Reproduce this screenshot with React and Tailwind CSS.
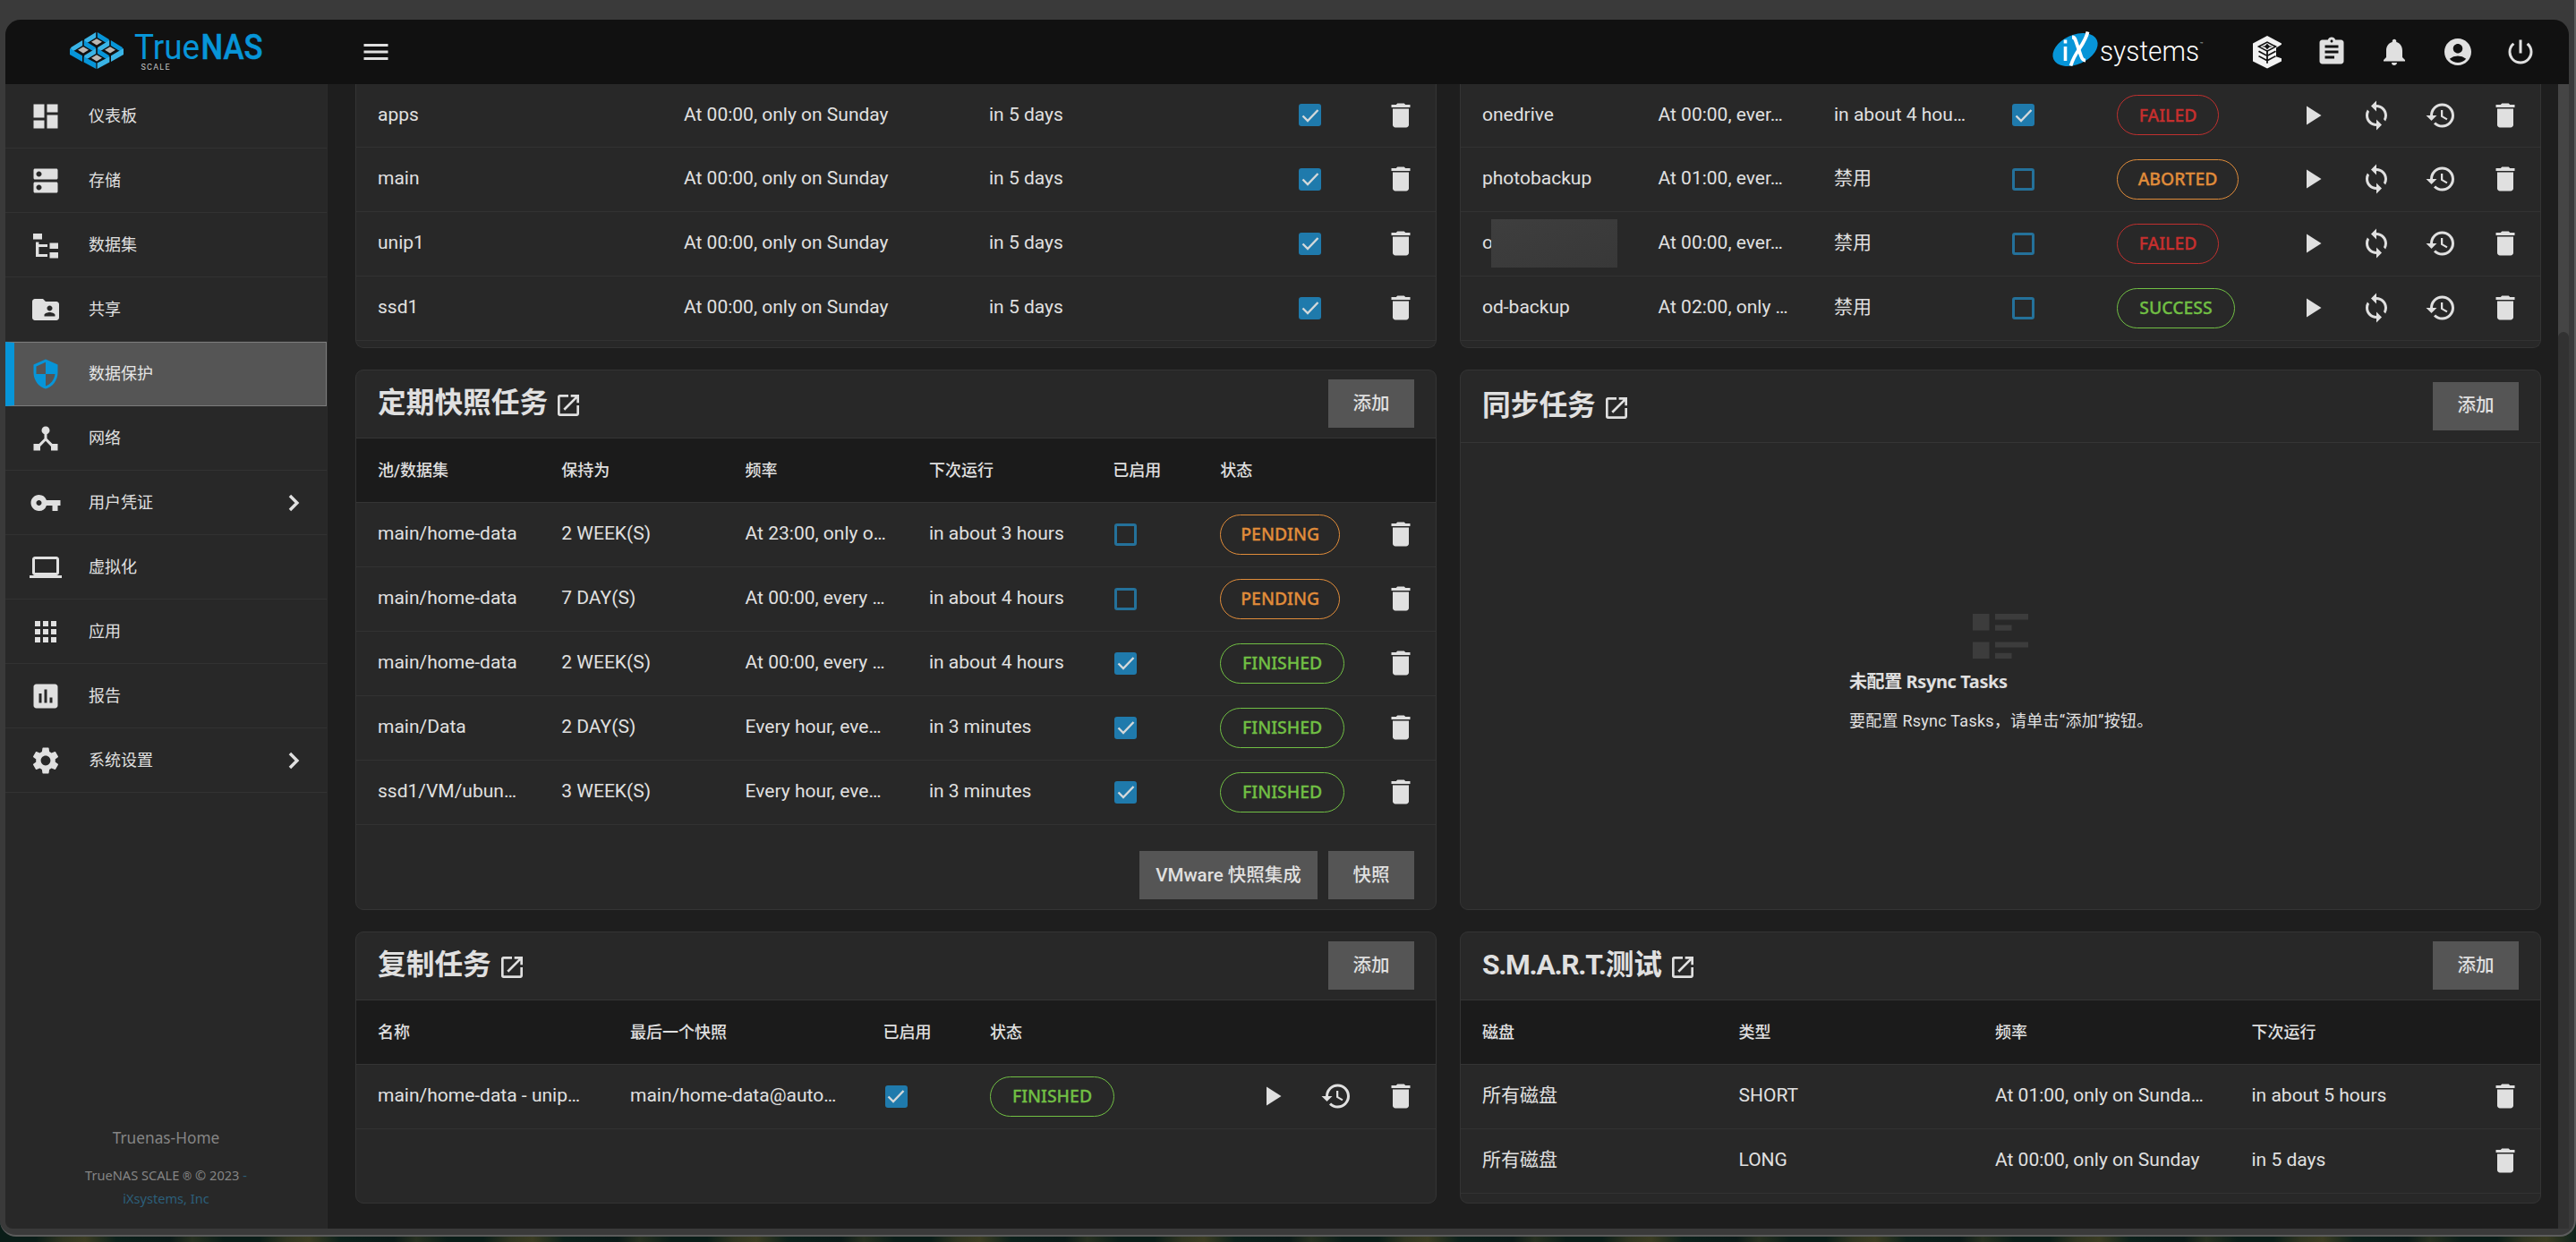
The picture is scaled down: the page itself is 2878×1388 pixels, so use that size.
import {
  MdDashboard, MdDns, MdFolderShared, MdSecurity, MdDeviceHub, MdVpnKey, MdLaptop, MdApps,
  MdAssessment, MdSettings, MdMenu, MdAssignment, MdNotifications,
  MdAccountCircle, MdPowerSettingsNew, MdDelete, MdHistory, MdSync, MdPlayArrow, MdOpenInNew,
} from 'react-icons/md';

function DatasetIcon() {
  return (
    <svg width="36" height="36" viewBox="0 0 36 36" fill="currentColor">
      <rect x="4" y="5" width="10" height="6.5" />
      <path d="M7 14.5h3.400v2.600H20v3h-9.600v7.800H20v3H7z" />
      <rect x="22.500" y="15.500" width="9.500" height="6.500" />
      <rect x="22.500" y="26" width="9.500" height="6.500" />
    </svg>
  );
}

function Chevron() {
  return (
    <svg width="36" height="36" viewBox="0 0 24 24" fill="none" stroke="currentColor" strokeWidth="2.300">
      <path d="M9.300 6.700l5.300 5.300-5.300 5.300" />
    </svg>
  );
}

function TrueNasMark() {
  const cells = [[30, 11.5], [15, 20.5], [45, 20.5], [30, 29.5]];
  return (
    <svg width="60" height="42" viewBox="0 0 60 42" className="overflow-visible">
      {cells.map(([x, y]) => (
        <g key={`${x}-${y}`} transform={`translate(${x} ${y})`}>
          <path d="M-13.800-2.600L-.8-10.400v6L-8.200 0-13.800 3z" fill="#3ab4e6" />
          <path d="M13.800-2.600L.8-10.400v6L8.200 0 13.800 3z" fill="#0795d8" />
          <path d="M-7.500 .3L0-4.300 7.500 .3 0 5z" fill="#111" />
          <path d="M-6 .3L0-3.300 6 .3 0 3.900z" fill="#b9b6b2" />
        </g>
      ))}
      <path d="M0 19l14 8.200v6.800L0 26z" fill="#0795d8" />
      <path d="M15.600 28.200l13.800 7.400V42l-13.800-7.400z" fill="#0795d8" />
      <path d="M60 19l-14 8.200v6.800L60 26z" fill="#3ab4e6" />
      <path d="M44.400 28.200l-13.800 7.400V42l13.800-7.400z" fill="#3ab4e6" />
    </svg>
  );
}

function TrueNasWord() {
  return (
    <svg width="152" height="50" viewBox="0 0 152 50" fontFamily="Roboto, 'Open Sans', sans-serif" className="overflow-visible">
      <text x="1" y="35" fontSize="39" fill="#0795d8" textLength="73" lengthAdjust="spacingAndGlyphs">True</text>
      <text x="75.500" y="35" fontSize="39" fontWeight="500" fill="#0795d8" stroke="#0795d8" strokeWidth="0.500" textLength="69" lengthAdjust="spacingAndGlyphs">NAS</text>
      <text x="8.500" y="47" fontSize="9" fill="#c4c4c4" textLength="32">SCALE</text>
    </svg>
  );
}

function IxLogo() {
  return (
    <svg width="176" height="50" viewBox="0 0 176 50" className="overflow-visible">
      <ellipse cx="25.500" cy="22.500" rx="26.500" ry="16.500" transform="rotate(-24 25.500 22.500)" fill="#0795d8" />
      <g stroke="#fff" fill="none">
        <path d="M14.500 19v16" strokeWidth="3.600" />
        <path d="M14.500 11.500v4" strokeWidth="3.600" />
        <path d="M22 8.500q3 0 4 4l6 17q1.500 5 5 5" strokeWidth="3.800" />
        <path d="M39.500 2.500q-1.500 7-9 18.500-7 10-10 19.500" strokeWidth="3.800" />
      </g>
      <text x="53" y="35" fontSize="32" fontFamily="Roboto, sans-serif" fontWeight="300" fill="#fff" textLength="111" lengthAdjust="spacingAndGlyphs">systems</text>
      <text x="165" y="18" fontSize="6" fontFamily="Roboto, sans-serif" fill="#ccc">™</text>
    </svg>
  );
}

function TrueCommandIcon() {
  return (
    <svg width="36" height="37" viewBox="0 0 36 44" preserveAspectRatio="none">
      <path d="M18 0L34 10v1.500l-6 4.500v11.500l6 2.500v4L18 43.500 2 34V10z" fill="#f2f2f2" />
      <path d="M18 8.500l9.500 5.800-9.500 6-9.500-6z" fill="none" stroke="#111" strokeWidth="1.800" />
      <path d="M18 19v17.500M8.500 20.500l9.500 6 9.500-6M8.500 27l9.500 6 9.500-6" fill="none" stroke="#111" strokeWidth="1.800" />
      <path d="M18 10.500l2.300 2.800 4 1-4 1-2.300 2.700-2.300-2.700-4-1 4-1z" fill="#111" />
    </svg>
  );
}

function EmptyIcon() {
  return (
    <svg width="62" height="50" viewBox="0 0 62 50" fill="#3c3c3c" className="ml-[138px]">
      <rect width="18.500" height="18.500" /><rect x="25" width="37" height="6.500" /><rect x="25" y="12.500" width="18.500" height="6.200" />
      <rect y="31.500" width="18.500" height="18.500" /><rect x="25" y="31.500" width="37" height="6" /><rect x="25" y="43.800" width="18.500" height="6.200" />
    </svg>
  );
}

const menu = [
  ['仪表板', MdDashboard],
  ['存储', MdDns],
  ['数据集', DatasetIcon],
  ['共享', MdFolderShared],
  ['数据保护', MdSecurity, 'active'],
  ['网络', MdDeviceHub],
  ['用户凭证', MdVpnKey, 'more'],
  ['虚拟化', MdLaptop],
  ['应用', MdApps],
  ['报告', MdAssessment],
  ['系统设置', MdSettings, 'more'],
];

function Sidebar() {
  return (
    <aside className="flex w-[360px] shrink-0 flex-col border-r border-[#2b2b2b] bg-[#282828]">
      {menu.map(([label, Icon, kind]) =>
        kind === 'active' ? (
          <div key={label} className="flex h-[72px] items-center border border-l-[10px] border-[#7c7c7c] border-l-[#0795d8] bg-[#555] pb-px">
            <Icon size={36} className="ml-[17px] text-[#0795d8]" />
            <span className="ml-[30px] text-[18px] text-[#e6e6e6]">{label}</span>
          </div>
        ) : (
          <div key={label} className="flex h-[72px] items-center border-b border-[#323232] pl-[27px] pr-[19px]">
            <Icon size={36} />
            <span className="ml-[30px] grow text-[18px]">{label}</span>
            {kind === 'more' && <Chevron />}
          </div>
        )
      )}
      <div className="mt-auto flex flex-col items-center pb-[22px] font-['Noto_Sans',sans-serif] text-[#858585]">
        <div className="text-[17.300px] leading-6">Truenas-Home</div>
        <div className="mt-[17px] text-[14.600px] leading-6">TrueNAS SCALE <span className="font-[Roboto] text-[13px]">®</span> © 2023 <span className="text-[#2c5f7a]">-</span></div>
        <div className="text-[14.600px] leading-6 text-[#2c5f7a]">iXsystems, Inc</div>
      </div>
    </aside>
  );
}

function TopBar() {
  return (
    <header className="flex h-[72px] shrink-0 items-center rounded-t-[17px] bg-[#111] pl-[72px] pr-[36px]">
      <div className="-mt-1"><TrueNasMark /></div>
      <div className="-mt-1 ml-[11px]"><TrueNasWord /></div>
      <MdMenu size={36} className="ml-[101px]" />
      <div className="ml-auto flex items-center">
        <IxLogo />
        <div className="ml-[46px]"><TrueCommandIcon /></div>
        <div className="ml-[36px] flex gap-[34.500px]">
          <MdAssignment size={36} />
          <MdNotifications size={36} />
          <MdAccountCircle size={36} />
          <MdPowerSettingsNew size={36} />
        </div>
      </div>
    </header>
  );
}

function Check({ on }) {
  return on ? (
    <span className="ml-[2px] flex size-[25px] items-center justify-center rounded-[3px] bg-[#1f7aac]">
      <svg width="20" height="20" viewBox="0 0 20 20" fill="none" stroke="#d3d8da" strokeWidth="2.400"><path d="M1.500 10.500l5.500 5.500L18.500 4" /></svg>
    </span>
  ) : (
    <span className="ml-[2px] block size-[25px] rounded-[3px] border-[3px] border-[#24719a]" />
  );
}

const tones = {
  FAILED: 'w-[114px] border-[#c0302f] text-[#c62f2e]',
  ABORTED: 'w-[136px] border-[#e08c3a] text-[#e08c3a]',
  SUCCESS: 'w-[132px] border-[#71bf44] text-[#71bf44]',
  PENDING: 'w-[134px] border-[#e08c3a] text-[#e08c3a]',
  FINISHED: 'w-[139px] border-[#71bf44] text-[#71bf44]',
};

function Pill({ state }) {
  return (
    <span className={`flex h-[45px] items-center justify-center rounded-full border-[1.500px] font-['Noto_Sans',sans-serif] text-[19.400px] font-medium [-webkit-text-stroke:0.3px_currentColor] ${tones[state]}`}>
      {state}
    </span>
  );
}

const actionIcons = { play: MdPlayArrow, sync: MdSync, history: MdHistory, trash: MdDelete };

function Row({ cols, cells, state, on, actions, first }) {
  return (
    <div className={`grid shrink-0 items-center border-b border-[#323232] pb-px pl-6 pr-[21px] text-[21px] ${first ? 'h-[71px]' : 'h-[72px]'} ${cols}`}>
      {cells.map((c, i) => (
        <span key={i} className="whitespace-nowrap">{c}</span>
      ))}
      {on !== undefined && <Check on={on} />}
      {state && <div className="flex"><Pill state={state} /></div>}
      <div className="col-start-[-2] flex gap-9">
        {actions.map((a) => {
          const Icon = actionIcons[a];
          return <Icon key={a} size={36} />;
        })}
      </div>
    </div>
  );
}

function Head({ cols, labels }) {
  return (
    <div className={`grid h-[72px] shrink-0 items-center border-b border-[#353535] bg-[#1b1b1b] pb-px pl-6 pr-[21px] text-[18px] font-medium ${cols}`}>
      {labels.map((l) => <span key={l} className="whitespace-nowrap">{l}</span>)}
    </div>
  );
}

function Button({ children }) {
  return <button className="flex h-[54px] w-24 items-center justify-center bg-[#555] text-[20.500px] font-medium">{children}</button>;
}

function Title({ children, tall }) {
  return (
    <div className={`flex shrink-0 items-center justify-between border-b border-[#353535] pb-px px-6 ${tall ? 'h-[81px]' : 'h-[76px]'}`}>
      <h2 className="flex items-center text-[31.700px] font-bold leading-none">
        {children}
        <MdOpenInNew size={32} className="ml-[7px] mt-[4px]" />
      </h2>
      <Button>添加</Button>
    </div>
  );
}

function Card({ children, cut }) {
  return (
    <section className={`flex flex-col overflow-hidden border border-[#343434] bg-[#282828] ${cut ? 'rounded-b-[9px] border-t-0' : 'rounded-[9px]'}`}>
      {children}
    </section>
  );
}

const scrubCols = 'grid-cols-[342px_341px_344px_1fr_auto]';
const cloudCols = 'grid-cols-[196.500px_196.500px_197px_119px_1fr_auto]';
const snapCols = 'grid-cols-[205.300px_205.300px_205.300px_205.300px_120px_1fr_auto]';
const replCols = 'grid-cols-[282px_282.500px_119.500px_1fr_auto]';
const smartCols = 'grid-cols-[286.500px_286.500px_286.500px_1fr_auto]';
const allActions = ['play', 'sync', 'history', 'trash'];

function Redacted() {
  return (
    <span className="flex items-center">
      <span className="w-[10px]">o</span>
      <span className="relative h-[54px] w-[141px] bg-gradient-to-br from-[#3e3e3e] to-[#383838]" />
    </span>
  );
}

export default function App() {
  return (
    <div className="h-[1388px] w-[2878px] overflow-hidden bg-[repeating-linear-gradient(90deg,#0a1d18_0px,#0a1d18_40px,#2e3420_70px,#3a3c22_95px,#0c211b_130px,#0b1a18_190px,#263020_215px,#0a1d18_250px)] text-[#e0e0e0] font-[Roboto,'Noto_Sans_CJK_SC',sans-serif]">
      <div className="flex h-[1382px] flex-col rounded-b-[18px] border-b-2 border-r-2 border-[#5c5c5c] bg-[#3a3a3a] pb-[7px] pl-[6px] pr-[6px] pt-[22px]">
        <TopBar />
        <div className="flex min-h-0 grow overflow-hidden rounded-bl-[8px]">
          <Sidebar />
          <main className="grid grow grid-cols-[1208px_1208px] grid-rows-[295px_604px_304px] gap-x-[26px] gap-y-6 bg-[#1e1e1e] pl-[31px]">
            <Card cut>
              {['apps', 'main', 'unip1', 'ssd1'].map((n, i) => (
                <Row key={n} first={i === 0} cols={scrubCols} cells={[n, 'At 00:00, only on Sunday', 'in 5 days']} on actions={['trash']} />
              ))}
            </Card>
            <Card cut>
              <Row first cols={cloudCols} cells={['onedrive', 'At 00:00, ever…', 'in about 4 hou…']} on state="FAILED" actions={allActions} />
              <Row cols={cloudCols} cells={['photobackup', 'At 01:00, ever…', '禁用']} on={false} state="ABORTED" actions={allActions} />
              <Row cols={cloudCols} cells={[<Redacted />, 'At 00:00, ever…', '禁用']} on={false} state="FAILED" actions={allActions} />
              <Row cols={cloudCols} cells={['od-backup', 'At 02:00, only …', '禁用']} on={false} state="SUCCESS" actions={allActions} />
            </Card>
            <Card>
              <Title>定期快照任务</Title>
              <Head cols={snapCols} labels={['池/数据集', '保持为', '频率', '下次运行', '已启用', '状态']} />
              <Row cols={snapCols} cells={['main/home-data', '2 WEEK(S)', 'At 23:00, only o…', 'in about 3 hours']} on={false} state="PENDING" actions={['trash']} />
              <Row cols={snapCols} cells={['main/home-data', '7 DAY(S)', 'At 00:00, every …', 'in about 4 hours']} on={false} state="PENDING" actions={['trash']} />
              <Row cols={snapCols} cells={['main/home-data', '2 WEEK(S)', 'At 00:00, every …', 'in about 4 hours']} on state="FINISHED" actions={['trash']} />
              <Row cols={snapCols} cells={['main/Data', '2 DAY(S)', 'Every hour, eve…', 'in 3 minutes']} on state="FINISHED" actions={['trash']} />
              <Row cols={snapCols} cells={['ssd1/VM/ubun…', '3 WEEK(S)', 'Every hour, eve…', 'in 3 minutes']} on state="FINISHED" actions={['trash']} />
              <div className="mt-auto flex justify-end gap-3 pb-[11px] pr-6">
                <button className="h-[54px] w-[199px] bg-[#555] text-[20.500px] font-medium">VMware 快照集成</button>
                <Button>快照</Button>
              </div>
            </Card>
            <Card>
              <Title tall>同步任务</Title>
              <div className="flex grow items-center pb-[4px] pl-[434px]">
                <div>
                  <EmptyIcon />
                  <div className="mt-[11px] font-['Noto_Sans','Noto_Sans_CJK_SC',sans-serif] text-[20px] font-bold leading-[30px] tracking-[-0.4px]">未配置 Rsync Tasks</div>
                  <div className="mt-[14px] text-[18px] leading-[30px] tracking-[0.25px]">要配置 Rsync Tasks，请单击“添加”按钮。</div>
                </div>
              </div>
            </Card>
            <Card>
              <Title>复制任务</Title>
              <Head cols={replCols} labels={['名称', '最后一个快照', '已启用', '状态']} />
              <Row cols={replCols} cells={['main/home-data - unip…', 'main/home-data@auto…']} on state="FINISHED" actions={['play', 'history', 'trash']} />
            </Card>
            <Card>
              <Title><span className="tracking-[-1.300px]">S.M.A.R.T.</span>测试</Title>
              <Head cols={smartCols} labels={['磁盘', '类型', '频率', '下次运行']} />
              <Row cols={smartCols} cells={['所有磁盘', 'SHORT', 'At 01:00, only on Sunda…', 'in about 5 hours']} actions={['trash']} />
              <Row cols={smartCols} cells={['所有磁盘', 'LONG', 'At 00:00, only on Sunday', 'in 5 days']} actions={['trash']} />
            </Card>
          </main>
          <div className="w-3 shrink-0 bg-[#454545] pt-[277px]">
            <div className="h-full rounded-t-[6px] bg-[#323232]" />
          </div>
        </div>
      </div>
    </div>
  );
}
